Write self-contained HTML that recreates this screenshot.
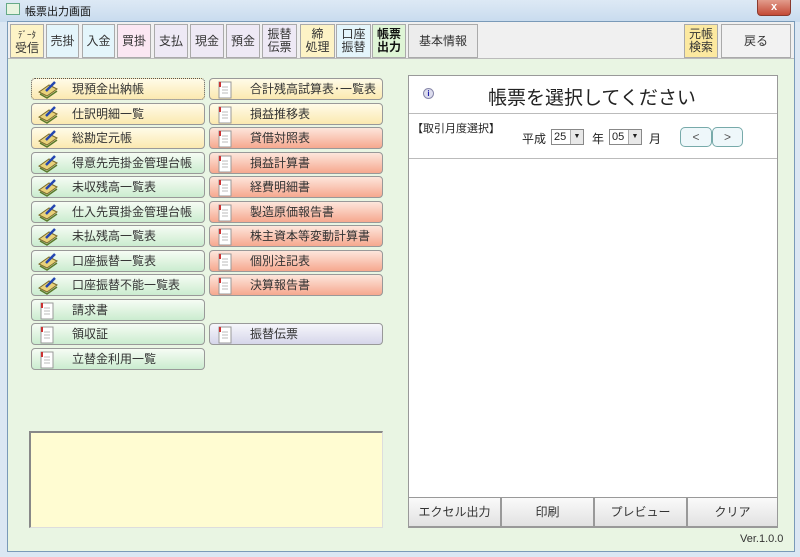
<!DOCTYPE html>
<html><head><meta charset="utf-8">
<style>
*{box-sizing:border-box;margin:0;padding:0}
body{width:800px;height:557px;overflow:hidden;background:#dbe7f3;font-family:"Liberation Sans","Noto Sans CJK JP",sans-serif;position:relative;font-size:12px;color:#222}
.abs{position:absolute}
.title{left:0;top:0;width:800px;height:22px;background:linear-gradient(#dde9f5,#c8dbee)}
.close{left:757px;top:0;width:34px;height:16px;background:linear-gradient(#e29c8c,#c44a36);border:1px solid #8a3a2e;border-top:none;border-radius:0 0 4px 4px;color:#fff;font-weight:bold;text-align:center;font-size:11px;line-height:14px}
.win{left:7px;top:21px;width:788px;height:531px;background:#e9f5e3;border:1px solid #7a9ab8}
.tb{left:8px;top:22px;width:786px;height:37px;background:#f0f0f0;border-bottom:1px solid #bbb}
.t{position:absolute;top:24px;height:34px;border:1px solid #aaa;display:flex;align-items:center;justify-content:center;text-align:center;font-size:12px;line-height:13px;color:#333}
.b{position:absolute;height:22px;border:1px solid #999;border-radius:4px;font-size:12px;line-height:20px;color:#333}
.b svg{position:absolute;left:5px;top:1px}
.b span{position:absolute;left:40px}
.y{background:linear-gradient(#fffbe8,#fbe9b0)}
.g{background:linear-gradient(#f6fcf4,#cbeccf)}
.r{background:linear-gradient(#fde6dc,#f6a88f)}
.l{background:linear-gradient(#f6f6fb,#d6d6ea)}
.bb{position:absolute;top:497px;height:30px;border:1px solid #999;background:linear-gradient(#fafafa,#e2e2e2);text-align:center;line-height:29px;font-size:12px;color:#333}
</style></head><body>
<div class="abs title"></div>
<div class="abs" style="left:6px;top:3px;width:14px;height:12px;background:#e8f4e0;border:1px solid #6a8"></div>
<div class="abs" style="left:25px;top:3px;font-size:11px;color:#111">帳票出力画面</div>
<div class="abs close">x</div>
<div class="abs win"></div>
<div class="abs tb"></div>
<div class="t" style="left:10px;width:34px;background:#fdf3c6"><div><span style="font-size:9px">ﾃﾞｰﾀ</span><br>受信</div></div>
<div class="t" style="left:46px;width:33px;background:#e4f5fb">売掛</div>
<div class="t" style="left:82px;width:33px;background:#e4f5fb">入金</div>
<div class="t" style="left:117px;width:34px;background:#fbe7f3">買掛</div>
<div class="t" style="left:154px;width:34px;background:#eee9f5">支払</div>
<div class="t" style="left:190px;width:34px;background:#eee9f5">現金</div>
<div class="t" style="left:226px;width:34px;background:#eee9f5">預金</div>
<div class="t" style="left:262px;width:35px;background:#eee9f5">振替<br>伝票</div>
<div class="t" style="left:300px;width:35px;background:#fdf3c6">締<br>処理</div>
<div class="t" style="left:336px;width:35px;background:#e4f5fb">口座<br>振替</div>
<div class="t" style="left:372px;width:34px;background:#dff5d6;font-weight:bold;color:#111">帳票<br>出力</div>
<div class="t" style="left:408px;width:70px;background:#ececec">基本情報</div>
<div class="t" style="left:684px;width:34px;background:#fce9a0">元帳<br>検索</div>
<div class="t" style="left:721px;width:70px;background:#f2f2f2">戻る</div>

<svg width="0" height="0" style="position:absolute"><defs>
<g id="bk"><path d="M2 12 L10 16 L20 9 L12 5 Z" fill="#e9d27a" stroke="#7a6a2a"/><path d="M3 14 L10 18 L20 11" fill="none" stroke="#5a7a2a" stroke-width="1.5"/><path d="M9 11 L18 2" stroke="#2446b0" stroke-width="2.5"/></g>
<g id="dc"><rect x="4" y="2" width="12" height="16" fill="#fff" stroke="#999"/><path d="M7 7h6M7 10h6M7 13h6" stroke="#bbb"/><rect x="4" y="2" width="2" height="5" fill="#c33"/></g>
</defs></svg>

<div class="b y" style="left:31px;top:78px;width:174px;border-style:dotted;border-color:#555"><svg width="24" height="20"><use href="#bk"/></svg><span>現預金出納帳</span></div>
<div class="b y" style="left:31px;top:103px;width:174px"><svg width="24" height="20"><use href="#bk"/></svg><span>仕訳明細一覧</span></div>
<div class="b y" style="left:31px;top:127px;width:174px"><svg width="24" height="20"><use href="#bk"/></svg><span>総勘定元帳</span></div>
<div class="b g" style="left:31px;top:152px;width:174px"><svg width="24" height="20"><use href="#bk"/></svg><span>得意先売掛金管理台帳</span></div>
<div class="b g" style="left:31px;top:176px;width:174px"><svg width="24" height="20"><use href="#bk"/></svg><span>未収残高一覧表</span></div>
<div class="b g" style="left:31px;top:201px;width:174px"><svg width="24" height="20"><use href="#bk"/></svg><span>仕入先買掛金管理台帳</span></div>
<div class="b g" style="left:31px;top:225px;width:174px"><svg width="24" height="20"><use href="#bk"/></svg><span>未払残高一覧表</span></div>
<div class="b g" style="left:31px;top:250px;width:174px"><svg width="24" height="20"><use href="#bk"/></svg><span>口座振替一覧表</span></div>
<div class="b g" style="left:31px;top:274px;width:174px"><svg width="24" height="20"><use href="#bk"/></svg><span>口座振替不能一覧表</span></div>
<div class="b g" style="left:31px;top:299px;width:174px"><svg width="24" height="20"><use href="#dc"/></svg><span>請求書</span></div>
<div class="b g" style="left:31px;top:323px;width:174px"><svg width="24" height="20"><use href="#dc"/></svg><span>領収証</span></div>
<div class="b g" style="left:31px;top:348px;width:174px"><svg width="24" height="20"><use href="#dc"/></svg><span>立替金利用一覧</span></div>

<div class="b y" style="left:209px;top:78px;width:174px"><svg width="24" height="20"><use href="#dc"/></svg><span>合計残高試算表･一覧表</span></div>
<div class="b y" style="left:209px;top:103px;width:174px"><svg width="24" height="20"><use href="#dc"/></svg><span>損益推移表</span></div>
<div class="b r" style="left:209px;top:127px;width:174px"><svg width="24" height="20"><use href="#dc"/></svg><span>貸借対照表</span></div>
<div class="b r" style="left:209px;top:152px;width:174px"><svg width="24" height="20"><use href="#dc"/></svg><span>損益計算書</span></div>
<div class="b r" style="left:209px;top:176px;width:174px"><svg width="24" height="20"><use href="#dc"/></svg><span>経費明細書</span></div>
<div class="b r" style="left:209px;top:201px;width:174px"><svg width="24" height="20"><use href="#dc"/></svg><span>製造原価報告書</span></div>
<div class="b r" style="left:209px;top:225px;width:174px"><svg width="24" height="20"><use href="#dc"/></svg><span>株主資本等変動計算書</span></div>
<div class="b r" style="left:209px;top:250px;width:174px"><svg width="24" height="20"><use href="#dc"/></svg><span>個別注記表</span></div>
<div class="b r" style="left:209px;top:274px;width:174px"><svg width="24" height="20"><use href="#dc"/></svg><span>決算報告書</span></div>
<div class="b l" style="left:209px;top:323px;width:174px"><svg width="24" height="20"><use href="#dc"/></svg><span>振替伝票</span></div>

<div class="abs" style="left:29px;top:431px;width:354px;height:97px;background:#fffcd2;border:1px solid #ddd;border-top:2px solid #888;border-left:2px solid #888"></div>

<div class="abs" style="left:408px;top:75px;width:370px;height:453px;background:#fff;border:1px solid #999"></div>
<div class="abs" style="left:409px;top:113px;width:368px;height:1px;background:#bbb"></div>
<div class="abs" style="left:409px;top:158px;width:368px;height:1px;background:#bbb"></div>
<div class="abs" style="left:423px;top:88px;width:11px;height:11px;border-radius:50%;background:#dde;border:1px solid #88a;font-size:8px;color:#22a;text-align:center;line-height:9px;font-weight:bold">i</div>
<div class="abs" style="left:488px;top:83px;font-size:19px;color:#222">帳票を選択してください</div>
<div class="abs" style="left:412px;top:120px;font-size:11px">【取引月度選択】</div>
<div class="abs" style="left:522px;top:130px;font-size:12px">平成</div>
<div class="abs" style="left:551px;top:129px;width:33px;height:16px;border:1px solid #888;background:#fff;font-size:11px;line-height:14px;padding-left:2px">25<span style="position:absolute;right:0;top:0;width:13px;height:14px;background:#e8e8e8;border-left:1px solid #aaa;font-size:7px;text-align:center">▼</span></div>
<div class="abs" style="left:592px;top:130px;font-size:12px">年</div>
<div class="abs" style="left:609px;top:129px;width:33px;height:16px;border:1px solid #888;background:#fff;font-size:11px;line-height:14px;padding-left:2px">05<span style="position:absolute;right:0;top:0;width:13px;height:14px;background:#e8e8e8;border-left:1px solid #aaa;font-size:7px;text-align:center">▼</span></div>
<div class="abs" style="left:649px;top:130px;font-size:12px">月</div>
<div class="abs" style="left:680px;top:127px;width:32px;height:20px;border:1px solid #7aa;border-radius:5px;background:#eef7fa;text-align:center;line-height:18px;color:#555">&lt;</div>
<div class="abs" style="left:712px;top:127px;width:31px;height:20px;border:1px solid #7aa;border-radius:5px;background:#eef7fa;text-align:center;line-height:18px;color:#555">&gt;</div>

<div class="bb" style="left:408px;width:93px">エクセル出力</div>
<div class="bb" style="left:501px;width:93px">印刷</div>
<div class="bb" style="left:594px;width:93px">プレビュー</div>
<div class="bb" style="left:687px;width:91px">クリア</div>
<div class="abs" style="left:740px;top:533px;font-size:11px;color:#333">Ver.1.0.0</div>
</body></html>
